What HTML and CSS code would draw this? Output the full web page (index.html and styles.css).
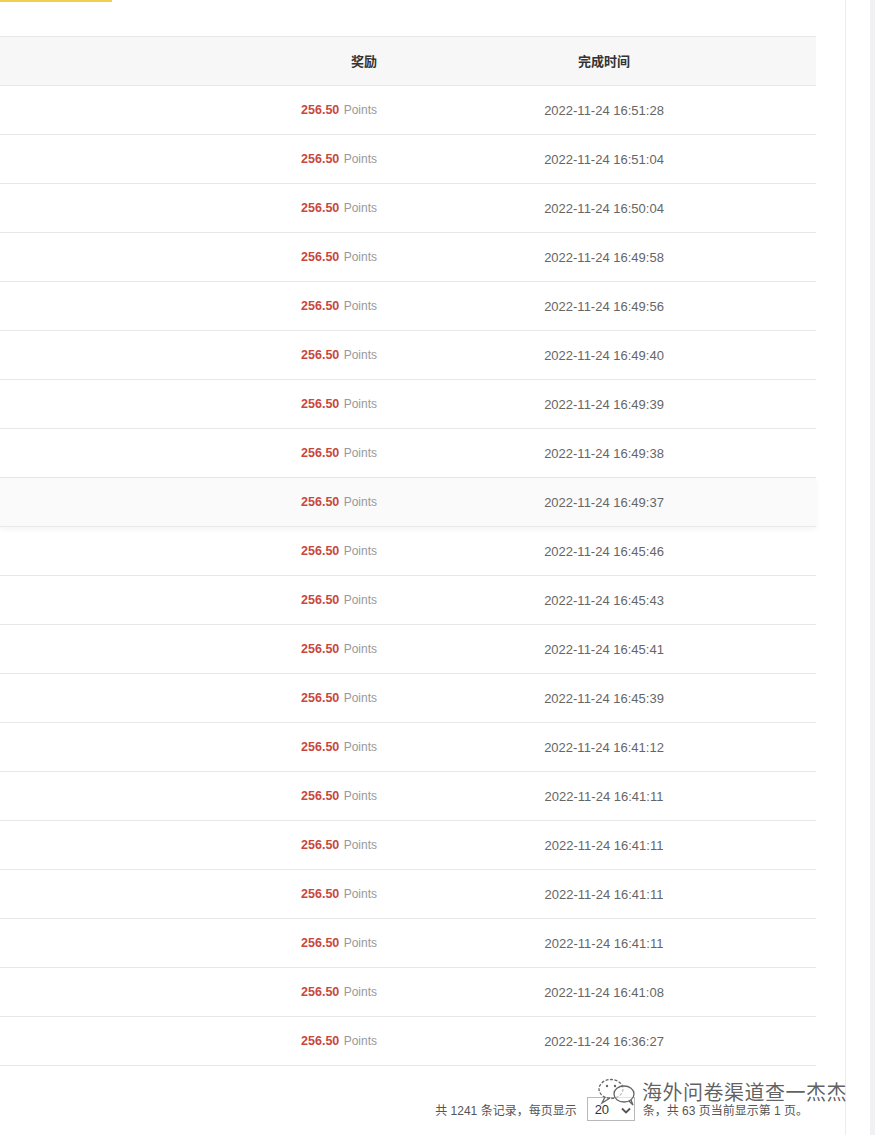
FILE: index.html
```html
<!DOCTYPE html>
<html lang="zh">
<head>
<meta charset="utf-8">
<title>记录</title>
<link rel="stylesheet" href="styles.css">
</head>
<body>
<div class="page">
  <div class="main">
    <div class="topbar"><div class="tab-underline"></div></div>
    <div class="table">
      <div class="row head">
        <div class="cell reward">奖励</div>
        <div class="cell time">完成时间</div>
      </div>
      <div class="row"><div class="cell reward"><b>256.50</b> Points</div><div class="cell time">2022-11-24 16:51:28</div></div>
      <div class="row"><div class="cell reward"><b>256.50</b> Points</div><div class="cell time">2022-11-24 16:51:04</div></div>
      <div class="row"><div class="cell reward"><b>256.50</b> Points</div><div class="cell time">2022-11-24 16:50:04</div></div>
      <div class="row"><div class="cell reward"><b>256.50</b> Points</div><div class="cell time">2022-11-24 16:49:58</div></div>
      <div class="row"><div class="cell reward"><b>256.50</b> Points</div><div class="cell time">2022-11-24 16:49:56</div></div>
      <div class="row"><div class="cell reward"><b>256.50</b> Points</div><div class="cell time">2022-11-24 16:49:40</div></div>
      <div class="row"><div class="cell reward"><b>256.50</b> Points</div><div class="cell time">2022-11-24 16:49:39</div></div>
      <div class="row"><div class="cell reward"><b>256.50</b> Points</div><div class="cell time">2022-11-24 16:49:38</div></div>
      <div class="row hover"><div class="cell reward"><b>256.50</b> Points</div><div class="cell time">2022-11-24 16:49:37</div></div>
      <div class="row"><div class="cell reward"><b>256.50</b> Points</div><div class="cell time">2022-11-24 16:45:46</div></div>
      <div class="row"><div class="cell reward"><b>256.50</b> Points</div><div class="cell time">2022-11-24 16:45:43</div></div>
      <div class="row"><div class="cell reward"><b>256.50</b> Points</div><div class="cell time">2022-11-24 16:45:41</div></div>
      <div class="row"><div class="cell reward"><b>256.50</b> Points</div><div class="cell time">2022-11-24 16:45:39</div></div>
      <div class="row"><div class="cell reward"><b>256.50</b> Points</div><div class="cell time">2022-11-24 16:41:12</div></div>
      <div class="row"><div class="cell reward"><b>256.50</b> Points</div><div class="cell time">2022-11-24 16:41:11</div></div>
      <div class="row"><div class="cell reward"><b>256.50</b> Points</div><div class="cell time">2022-11-24 16:41:11</div></div>
      <div class="row"><div class="cell reward"><b>256.50</b> Points</div><div class="cell time">2022-11-24 16:41:11</div></div>
      <div class="row"><div class="cell reward"><b>256.50</b> Points</div><div class="cell time">2022-11-24 16:41:11</div></div>
      <div class="row"><div class="cell reward"><b>256.50</b> Points</div><div class="cell time">2022-11-24 16:41:08</div></div>
      <div class="row"><div class="cell reward"><b>256.50</b> Points</div><div class="cell time">2022-11-24 16:36:27</div></div>
    </div>
    <div class="pager">
      <span>共 1241 条记录，每页显示</span>
      <div class="select"><span>20</span>
        <svg class="chev" width="10" height="7" viewBox="0 0 10 7"><path d="M1 1.5 L5 5.5 L9 1.5" fill="none" stroke="#555" stroke-width="1.8"/></svg>
      </div>
      <span>条，共 63 页当前显示第 1 页。</span>
      <div class="watermark">
        <svg class="wm-icon" width="44" height="30" viewBox="0 0 44 30">
          <ellipse cx="15" cy="12" rx="12" ry="9.5" fill="none" stroke="#666" stroke-width="1.3" stroke-dasharray="3 1.5"/>
          <path d="M9 20 L6 26 L14 21" fill="none" stroke="#666" stroke-width="1.3"/>
          <ellipse cx="28" cy="17" rx="10" ry="8" fill="rgba(255,255,255,0.6)" stroke="#666" stroke-width="1.3"/>
          <path d="M33 24 L37 28 L35 23" fill="none" stroke="#666" stroke-width="1.3"/>
          <circle cx="11" cy="9" r="1.2" fill="#666"/>
          <circle cx="19" cy="9" r="1.2" fill="#666"/>
        </svg>
        <span class="wm-text">海外问卷渠道查一杰杰</span>
      </div>
    </div>
  </div>
  <div class="side"></div>
  <div class="scroll"></div>
</div>
</body>
</html>
```

FILE: styles.css
```css
html, body {
  margin: 0;
  padding: 0;
  background: #ffffff;
}
body {
  font-family: "Liberation Sans", Arial, "Noto Sans CJK SC", sans-serif;
  color: #555;
}
.page {
  display: flex;
  width: 875px;
  min-height: 1135px;
}
.main {
  width: 816px;
  flex: none;
}
.side {
  width: 29px;
  flex: none;
  border-right: 1px solid #ececec;
}
.scroll {
  flex: 1;
  margin-left: 24px;
  background: #f1f1f4;
}
.topbar {
  height: 36px;
}
.tab-underline {
  width: 112px;
  height: 2px;
  background: #f1cf50;
}
.table {
  border-top: 1px solid #e8e8e8;
}
.row {
  display: grid;
  grid-template-columns: 392px 424px;
  height: 48px;
  border-bottom: 1px solid #e8e8e8;
  align-items: center;
  font-size: 12px;
}
.row.head {
  background: #f7f7f7;
  font-family: "Noto Sans CJK SC", "Liberation Sans", sans-serif;
  font-size: 13px;
  font-weight: bold;
  color: #333;
  padding-bottom: 2px;
  height: 46px;
}
.row.hover {
  background: #fafafa;
  box-shadow: 0 2px 6px rgba(0, 0, 0, 0.05);
  position: relative;
}
.cell.reward {
  text-align: right;
  padding-right: 15px;
  color: #999;
}
.row.head .cell.reward,
.row.head .cell.time {
  color: #333;
}
.cell.reward b {
  color: #c9473d;
  font-size: 12.5px;
  font-weight: bold;
  margin-right: 1px;
}
.cell.time {
  text-align: center;
  color: #666;
  font-size: 13px;
}
.pager {
  position: relative;
  display: flex;
  justify-content: flex-end;
  align-items: center;
  margin-top: 30px;
  padding-right: 8px;
  height: 26px;
  font-family: "Liberation Sans", Arial, "Noto Sans CJK SC", sans-serif;
  font-size: 12px;
  color: #555;
}
.select {
  display: flex;
  align-items: center;
  justify-content: space-between;
  width: 40px;
  height: 22px;
  padding: 0 3px;
  margin: 0 8px 0 10px;
  border: 1px solid #b8b8b8;
  font-size: 13px;
  color: #333;
}
.select span {
  padding-left: 4px;
}
.chev {
  margin-top: 2px;
}
.watermark {
  position: absolute;
  right: -31px;
  top: -19px;
  display: flex;
  align-items: center;
  gap: 2px;
}
.wm-icon {
  display: block;
}
.wm-text {
  font-family: "Noto Sans CJK SC", sans-serif;
  font-size: 20px;
  line-height: 24px;
  color: rgba(70, 70, 70, 0.85);
  letter-spacing: 0.5px;
  text-shadow: 0 0 2px #fff, 0 0 2px #fff;
}
```
